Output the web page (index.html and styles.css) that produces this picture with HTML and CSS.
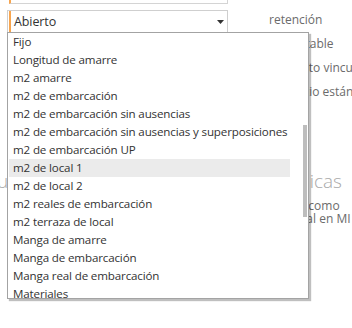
FILE: index.html
```html
<!DOCTYPE html>
<html lang="es">
<head>
  <meta charset="utf-8">
  <title>Tarifa - concepto</title>
  <link rel="stylesheet" href="styles.css">
</head>
<body>

  <div class="form-top">
    <div class="field-col">
      <div class="field-top"></div>
      <div class="select">
        <div class="select-value">Abierto</div>
        <svg class="select-arrow" width="7" height="4" viewBox="0 0 7 4">
          <path d="M0 0 L7 0 L3.5 4 Z" fill="#333"></path>
        </svg>
      </div>
    </div>
    <div class="labels">
      <p class="label-line">retención</p>
      <p class="label-line">No editable</p>
      <p class="label-line">Producto vinculado</p>
      <p class="label-line">Es precio estándar</p>
    </div>
  </div>

  <div class="section">
    <div class="section-cut">
      <p class="section-title">u</p>
    </div>
    <div class="section-right">
      <p class="section-title">Técnicas</p>
      <p class="section-text">Se usa como</p>
      <p class="section-text">Del total en MI</p>
    </div>
  </div>

  <div class="popup">
    <ul class="options">
      <li class="option">Fijo</li>
      <li class="option">Longitud de amarre</li>
      <li class="option">m2 amarre</li>
      <li class="option">m2 de embarcación</li>
      <li class="option">m2 de embarcación sin ausencias</li>
      <li class="option">m2 de embarcación sin ausencias y superposiciones</li>
      <li class="option">m2 de embarcación UP</li>
      <li class="option option-hover">m2 de local 1</li>
      <li class="option">m2 de local 2</li>
      <li class="option">m2 reales de embarcación</li>
      <li class="option">m2 terraza de local</li>
      <li class="option">Manga de amarre</li>
      <li class="option">Manga de embarcación</li>
      <li class="option">Manga real de embarcación</li>
      <li class="option">Materiales</li>
    </ul>
    <div class="scrollbar">
      <div class="scroll-thumb"></div>
    </div>
  </div>

</body>
</html>
```

FILE: styles.css
```css
body {
  margin: 0;
  background-color: white;
  font-family: "Open Sans", "Noto Sans", sans-serif;
  font-size: 12px;
  color: #333;
  overflow: hidden;
  height: 328px;
  position: relative;
}

p {
  margin: 0;
}

.form-top {
  display: flex;
  padding-left: 7px;
  column-gap: 41px;
}

.field-col {
  width: 221px;
  flex-shrink: 0;
}

.field-top {
  height: 3px;
  border-right: 1px solid #d4d4d4;
  border-bottom: 1px solid #d4d4d4;
  margin-left: 2px;
  border-left: 2px solid #f7a54f;
}

.select {
  margin-top: 6px;
  height: 21px;
  border: 1px solid #cfcfcf;
  display: flex;
  align-items: center;
}

.select-value {
  flex: 1;
  height: 100%;
  margin-left: 1px;
  border-left: 2px solid #f7a54f;
  padding-left: 3px;
  line-height: 21px;
  font-size: 12.5px;
  letter-spacing: -0.1px;
  color: #333;
}

.select-arrow {
  margin-right: 3px;
  margin-top: 1px;
}

.labels {
  padding-top: 8px;
  color: #6b6b6b;
  white-space: nowrap;
}

.label-line {
  line-height: 24px;
}

.section {
  display: flex;
  margin-top: 65px;
}

.section-cut {
  width: 272px;
  flex-shrink: 0;
  margin-left: -3px;
}

.section-title {
  font-size: 19px;
  line-height: 24px;
  color: #a9a9a9;
  font-weight: 300;
}

.section-right {
  white-space: nowrap;
}

.section-right .section-title {
  margin-bottom: 6px;
}

.section-text {
  line-height: 13px;
  color: #6b6b6b;
}

/* dropdown list open over the form */
.popup {
  position: absolute;
  top: 32px;
  left: 7px;
  width: 302px;
  height: 267px;
  box-sizing: border-box;
  border: 1px solid #a3a3a3;
  box-shadow: 2px 2px 1px rgba(0, 0, 0, 0.25);
  background-color: white;
  display: flex;
  overflow: hidden;
}

.options {
  list-style: none;
  margin: 0;
  padding: 0 0 0 1px;
  flex: 1;
  min-width: 0;
}

.option {
  height: 18px;
  line-height: 18px;
  padding-left: 4px;
  white-space: nowrap;
  font-size: 11.6px;
  letter-spacing: -0.15px;
  color: #333;
}

.option-hover {
  background-color: #ebebeb;
}

.scrollbar {
  width: 18px;
  flex-shrink: 0;
}

.scroll-thumb {
  margin-top: 92px;
  margin-left: 13px;
  width: 4px;
  height: 92px;
  background-color: #bdbdbd;
}
```
